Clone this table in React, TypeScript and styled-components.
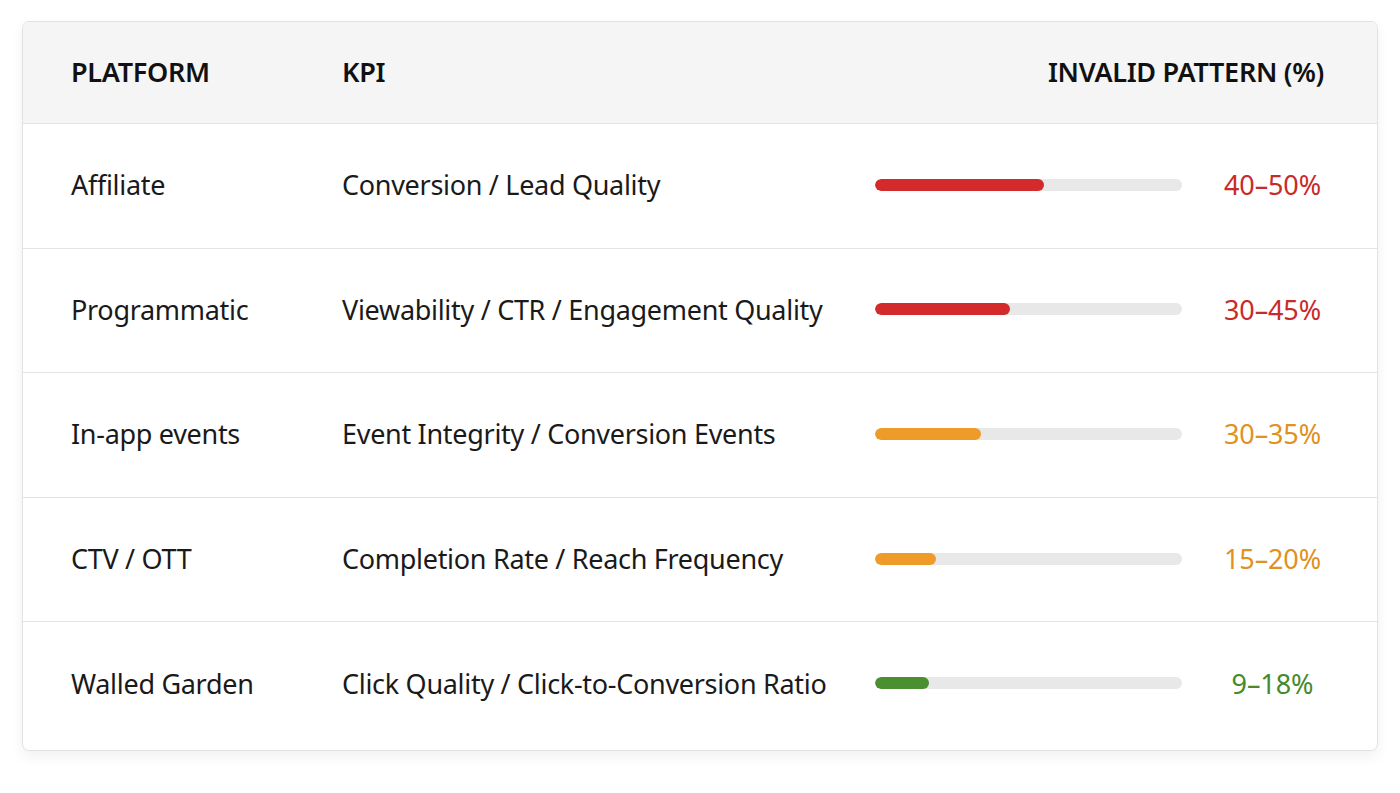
import React from "react";
import styled, { createGlobalStyle } from "styled-components";

const Global = createGlobalStyle`
  html, body { margin: 0; padding: 0; background: #ffffff; }
  body { font-family: "Noto Sans", "Open Sans", sans-serif; color: #1a1a1a; }
`;

const Page = styled.div`
  padding: 21px 22px 0 22px;
  width: 1400px;
  height: 793px;
  box-sizing: border-box;
`;

const Card = styled.div`
  border: 1px solid #e2e2e2;
  border-radius: 7px;
  background: #fff;
  overflow: hidden;
  box-shadow: 0 6px 14px rgba(0, 0, 0, 0.06);
`;

const Grid = styled.div`
  display: grid;
  grid-template-columns: 271px 533px 307px 1fr;
  align-items: center;
  padding: 0 46px 0 48px;
  box-sizing: border-box;
`;

const HeadRow = styled(Grid)`
  height: 102px;
  background: #f5f5f5;
  border-bottom: 1px solid #e3e3e3;
  padding-bottom: 2px;
`;

const HeadCell = styled.div<{ $right?: boolean; $span?: number }>`
  font-size: 27px;
  font-weight: 600;
  color: #111;
  letter-spacing: -0.3px;
  text-align: ${(p) => (p.$right ? "right" : "left")};
  grid-column: ${(p) => (p.$span ? `span ${p.$span}` : "auto")};
  padding-right: ${(p) => (p.$right ? "7px" : "0")};
`;

const Row = styled(Grid)<{ $last?: boolean }>`
  height: ${(p) => (p.$last ? "128px" : "124.6px")};
  border-bottom: ${(p) => (p.$last ? "none" : "1px solid #e3e3e3")};
  padding-bottom: ${(p) => (p.$last ? "6px" : "2px")};
`;

const Cell = styled.div`
  font-size: 27px;
  color: #1a1a1a;
  letter-spacing: -0.3px;
  white-space: nowrap;
`;

const Track = styled.div`
  height: 12px;
  border-radius: 6px;
  background: #e8e8e8;
  overflow: hidden;
`;

const Fill = styled.div<{ $color: string }>`
  height: 100%;
  border-radius: 6px;
  background: ${(p) => p.$color};
`;

const Value = styled.div<{ $color: string }>`
  font-size: 27px;
  color: ${(p) => p.$color};
  text-align: center;
  padding-left: 32px;
  letter-spacing: -0.1px;
`;

const RED = "#d32b2b";
const RED_T = "#c92a2a";
const ORANGE = "#ee9b2a";
const ORANGE_T = "#e0911e";
const GREEN = "#4a8f30";
const GREEN_T = "#458a2c";

const rows = [
  { p: "Affiliate", k: "Conversion / Lead Quality", w: 55, bar: RED, t: RED_T, v: "40–50%" },
  { p: "Programmatic", k: "Viewability / CTR / Engagement Quality", w: 44, bar: RED, t: RED_T, v: "30–45%" },
  { p: "In-app events", k: "Event Integrity / Conversion Events", w: 34.5, bar: ORANGE, t: ORANGE_T, v: "30–35%" },
  { p: "CTV / OTT", k: "Completion Rate / Reach Frequency", w: 20, bar: ORANGE, t: ORANGE_T, v: "15–20%" },
  { p: "Walled Garden", k: "Click Quality / Click-to-Conversion Ratio", w: 17.5, bar: GREEN, t: GREEN_T, v: "9–18%" },
];

export default function App() {
  return (
    <>
      <Global />
      <Page>
        <Card>
          <HeadRow>
            <HeadCell>PLATFORM</HeadCell>
            <HeadCell>KPI</HeadCell>
            <HeadCell $right $span={2}>INVALID PATTERN (%)</HeadCell>
          </HeadRow>
          {rows.map((r, i) => (
            <Row key={r.p} $last={i === rows.length - 1}>
              <Cell>{r.p}</Cell>
              <Cell>{r.k}</Cell>
              <Track>
                <Fill $color={r.bar} style={{ width: `${r.w}%` }} />
              </Track>
              <Value $color={r.t}>{r.v}</Value>
            </Row>
          ))}
        </Card>
      </Page>
    </>
  );
}
